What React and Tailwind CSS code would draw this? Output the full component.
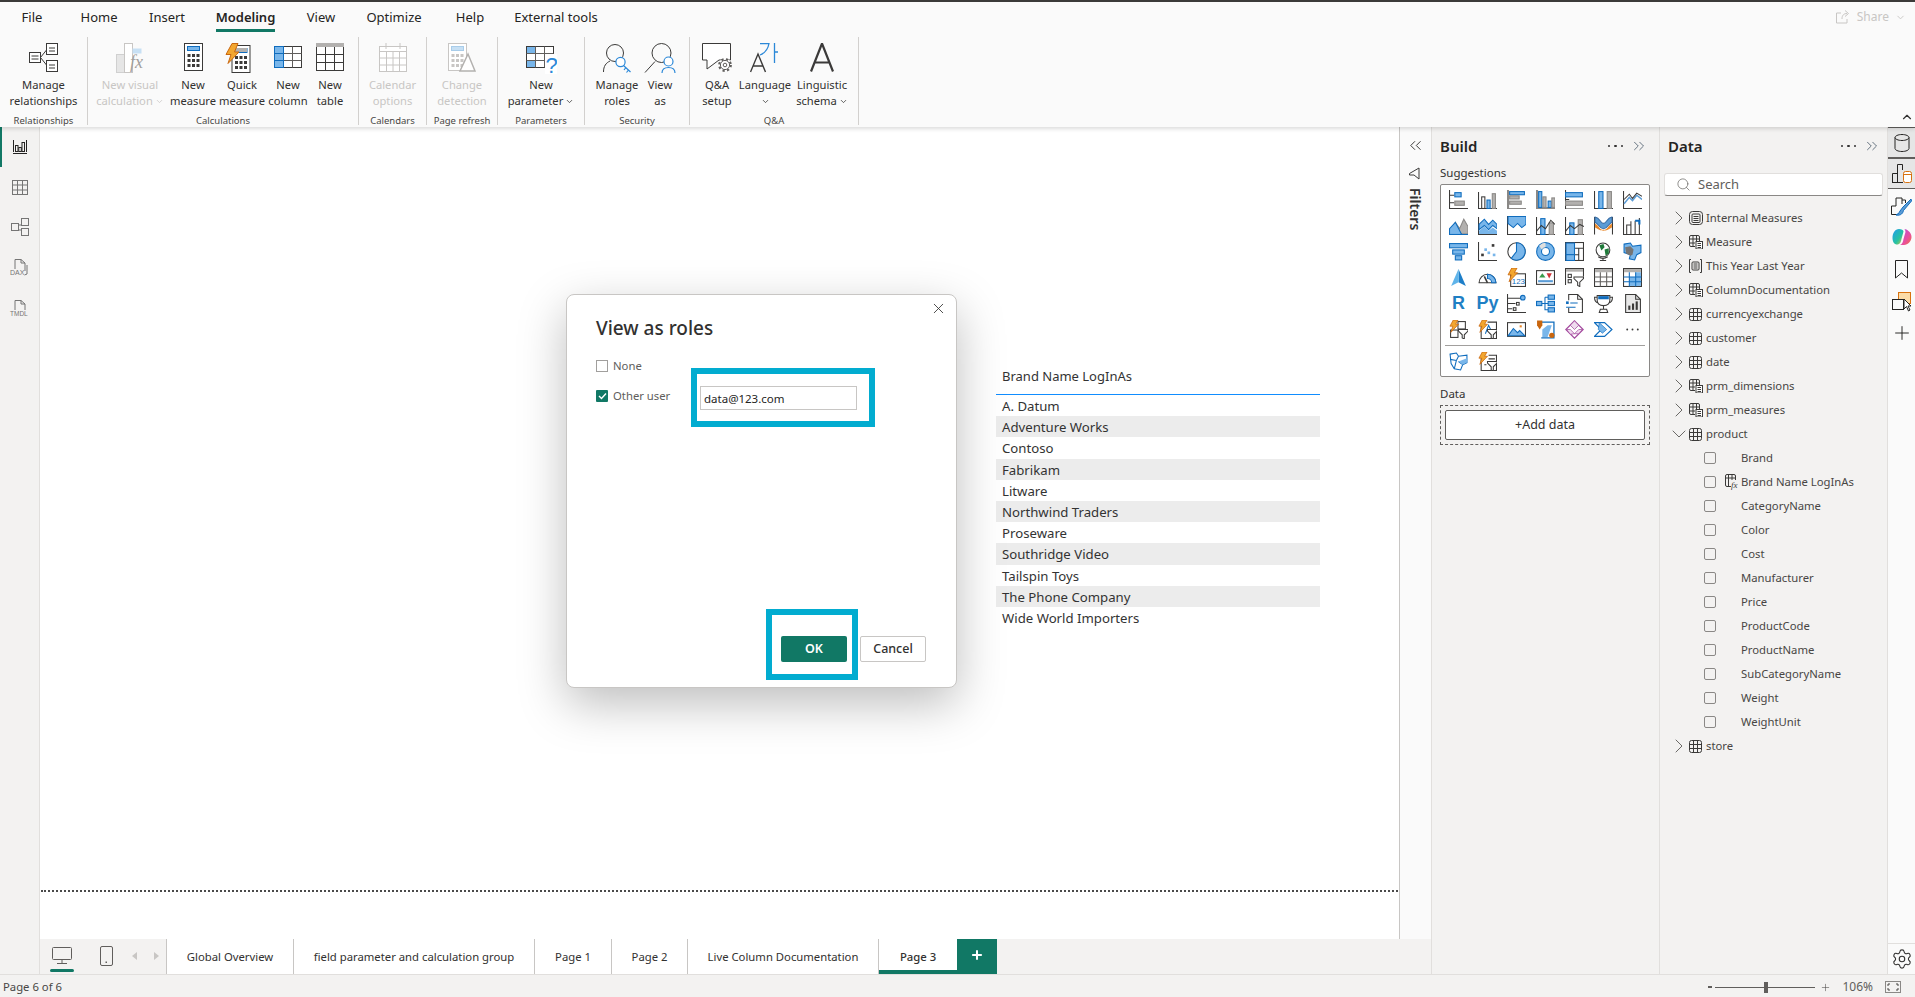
import React from 'react';
import { Search, X, Settings, ChevronRight, ChevronDown, ChevronUp, ChevronsLeft, ChevronsRight, Plus } from 'lucide-react';

const DK = '#3b3a39';
const BL = '#0f6cbd';
const FL = '#79b6ea';
const GR = '#b3b1af';
const LT = '#c8c6c4';

const Bx = ({ x, y, w, h, f = FL, s = BL }) => <rect x={x} y={y} width={w} height={h} fill={f} stroke={s} />;
const Gx = ({ x, y, w, h }) => <rect x={x} y={y} width={w} height={h} fill={GR} stroke="#8a8886" />;
const Ln = ({ d, s = DK, w = 1 }) => <path d={d} fill="none" stroke={s} strokeWidth={w} />;
const Bolt = ({ x = 0, y = 0, k = 1 }) => (
  <path transform={`translate(${x} ${y}) scale(${k})`} d="M4.5 0H9.5L7 4.5H10L2 13L4 6.5H1Z" fill="#f2a62f" stroke="#c9660e" strokeWidth=".8" />
);
const Funnel = ({ x = 0, y = 0 }) => (
  <path transform={`translate(${x} ${y})`} d="M.5.5H9.5V2L6 5.5V9.5L4 8.5V5.5L.5 2Z" fill="#fff" stroke={DK} />
);

const Viz = ({ children }) => (
  <svg width="19" height="19" viewBox="0 0 18 18" className="block">{children}</svg>
);

// visual gallery, left to right, top to bottom
const vizIcons = [
  <><Ln d="M.5 0V17.5H18M.5 5H5M.5 12H5" /><Bx x={5.5} y={2.5} w={6} h={4} /><Gx x={5.5} y={10.5} w={9} h={4} /></>,
  <><Ln d="M.5 2V17.5H18" /><rect x="3.5" y="6.5" width="3" height="11" fill="#fff" stroke={DK} /><Bx x={8.5} y={9.5} w={3} h={8} /><rect x="13.5" y="3.5" width="3" height="14" fill={GR} stroke="#8a8886" /></>,
  <><Ln d="M1 0V18H18" s="#8a8886" w={2} /><Bx x={2.5} y={1.5} w={14} h={3} /><Gx x={2.5} y={5.5} w={9} h={3} /><Gx x={2.5} y={10.5} w={11} h={3} /></>,
  <><Ln d="M1 0V17H18" s="#8a8886" w={2} /><Bx x={2.5} y={1.5} w={3} h={15} /><Gx x={6.5} y={6.5} w={3} h={10} /><Bx x={11.5} y={10.5} w={3} h={6} /><Gx x={15} y={7.5} w={3} h={9} /></>,
  <><Ln d="M.5 0V18H18M.5 9H4" /><Bx x={.5} y={2.5} w={16} h={4} /><Gx x={.5} y={10.5} w={16} h={4} /></>,
  <><Ln d="M.5 1V17.5H18" /><Bx x={4.5} y={1.5} w={4} h={16} /><Gx x={12.5} y={1.5} w={4} h={16} /></>,
  <><Ln d="M.5 1V17.5H18" /><Ln d="M1 13L6 7L9 10L13 5L18 9" s="#5a9bd5" w={1.4} /><Ln d="M1 9L6 4L9 8L13 3L18 6" /></>,
  <><path d="M1 17L6 6L10 12L14 3L18 10V17Z" fill={GR} stroke="#8a8886" /><path d="M.5 17.5V12L6 6L12 17.5Z" fill={FL} stroke={BL} /><Ln d="M0 17.5H18" s={BL} /></>,
  <><Ln d="M.5 1V17.5H18" /><path d="M1 8L6 3L10 8L14 4L18 8V12L14 9L10 13L6 9L1 13Z" fill={FL} stroke={BL} /><path d="M1 14L6 10L10 14L14 11L18 14V17H1Z" fill={FL} /></>,
  <><Ln d="M.5 0V17.5H18" /><path d="M1 .5H18V8L14 11L10 7L6 11L1 7Z" fill={FL} stroke={BL} /></>,
  <><Ln d="M.5 1V17.5H18" /><Bx x={4.5} y={2.5} w={4} h={15} /><Gx x={12.5} y={6.5} w={4} h={11} /><Ln d="M0 15L5 9L9 12L14 4L18 8" /></>,
  <><Ln d="M.5 1V17.5H18" /><rect x="4.5" y="6.5" width="4" height="11" fill={FL} stroke={BL} /><Gx x={12.5} y={3.5} w={4} h={14} /><Ln d="M0 15L5 9L9 12L14 8L18 10" /></>,
  <><Ln d="M.5 1V17.5M17.5 1V17.5" /><path d="M1 1C6 2 6 7 9 7S12 2 17 1V6C13 8 13 12 9 12S5 8 1 6Z" fill="#5a9bd5" stroke="#3a6ea5" /><path d="M1 7C5 9 5 13 9 13S13 9 17 7V11C13 13 12 14 9 14S5 13 1 11Z" fill="#e8882b" /></>,
  <><Ln d="M.5 1V17.5H18M3.5 17V8.5H7.5V17M7.5 17V5M11.5 17V4.5M15.5 17V2" /><Ln d="M11.5 4.5H15.5V8" s={BL} w={2} /></>,
  <><Bx x={.5} y={1.5} w={17} h={4} /><Bx x={3.5} y={7.5} w={11} h={4} /><Bx x={6} y={13} w={6} h={4} /></>,
  <><Ln d="M.5 0V17.5H18" /><rect x="3" y="11" width="2.5" height="2.5" fill={DK} /><rect x="6" y="6" width="2.5" height="2.5" fill={FL} /><rect x="9" y="9" width="2.5" height="2.5" fill={FL} /><rect x="13" y="2" width="2.5" height="2.5" fill={DK} /><rect x="14" y="11" width="2.5" height="2.5" fill={FL} /></>,
  <><circle cx="9" cy="9" r="8.2" fill="#fff" stroke={DK} /><path d="M9 9V.8A8.2 8.2 0 1 1 4 15.5Z" fill={FL} stroke={BL} /></>,
  <><circle cx="9" cy="9" r="6" fill="none" stroke={FL} strokeWidth="4.5" /><circle cx="9" cy="9" r="8.4" fill="none" stroke={BL} /><circle cx="9" cy="9" r="3.8" fill="none" stroke={BL} /><path d="M3 3.5A8 8 0 0 1 9 .8V5A4 4 0 0 0 5.5 7Z" fill="#e1dfdd" /></>,
  <><rect x=".5" y=".5" width="17" height="17" fill="#fff" stroke={DK} /><rect x="1" y="1" width="8" height="11" fill={FL} stroke={BL} /><rect x="1" y="12" width="8" height="5.5" fill={FL} stroke={BL} /><Ln d="M9.5 6H17.5M13 6V17.5M9.5 12H13" /></>,
  <><circle cx="8.5" cy="7.5" r="6.5" fill="#fff" stroke={DK} /><path d="M5 3L9 2L10 5L7 8ZM10 7L14 6L14 11L11 13Z" fill="#1f7a3a" /><Ln d="M4 14Q8.5 17 13 14M8.5 15V17.5M5.5 17.5H11.5" /></>,
  <><path d="M1 2L7 1L9 4L17 3V10L13 12L11 17L6 16L7 12L1 10Z" fill={FL} stroke={BL} /><path d="M2 5L7 4L10 7L9 12L7 13L3 11Z" fill="#757575" /></>,
  <><path d="M9 1L16 17L9 13.5Z" fill="#1d7ec8" /><path d="M9 1L2 17L9 13.5Z" fill="#5fb4ea" /></>,
  <><path d="M1 14A8 8 0 0 1 17 14Z" fill="#fff" stroke={DK} /><path d="M9 6A8 8 0 0 1 17 14H13A4 4 0 0 0 9 10Z" fill={FL} stroke={BL} /><Ln d="M9 14L6 8" w={1.5} /></>,
  <><rect x="3.5" y="5.5" width="14" height="12" fill="#fff" stroke={DK} /><text x="4.5" y="15" fontSize="7.5" fill="#0f6cbd" fontFamily="Liberation Sans">123</text><Bolt x={0} y={0} k={1} /></>,
  <><rect x=".5" y="2.5" width="17" height="13" fill="#fff" stroke={DK} /><path d="M3 9L6 5L9 9Z" fill="#3a9b4a" /><path d="M10 5H15L12.5 10Z" fill="#d13438" /><Ln d="M2 12.5H16" s="#5a9bd5" w={2} /></>,
  <><path d="M.5 16V.5H17.5V8" fill="none" stroke={DK} /><rect x="1" y="1" width="16" height="2.5" fill={GR} /><rect x="3" y="6" width="3" height="3" fill="#fff" stroke={DK} /><rect x="3" y="11" width="3" height="3" fill="#fff" stroke={DK} /><Funnel x={8} y={8} /></>,
  <><rect x=".5" y=".5" width="17" height="17" fill="#fff" stroke={DK} /><rect x="1" y="1" width="16" height="3" fill={GR} /><Ln d="M6 4V17.5M12 4V17.5M.5 8.5H17.5M.5 13H17.5" s="#605e5c" /></>,
  <><rect x=".5" y=".5" width="17" height="17" fill="#fff" stroke={DK} /><rect x="1" y="1" width="16" height="3" fill={GR} /><rect x="6" y="8.5" width="6" height="4.5" fill={FL} /><rect x="12" y="4" width="5" height="13" fill={FL} /><rect x="6" y="13" width="6" height="4" fill={FL} /><Ln d="M6 4V17.5M12 4V17.5M.5 8.5H17.5M.5 13H17.5" s={BL} /></>,
  'R',
  'Py',
  <><Ln d="M.5 0V17.5H18M1 4H13M1 9H8M1 14H5" /><circle cx="15" cy="3.5" r="2.2" fill={FL} stroke={BL} /><rect x="9" y="8" width="2.5" height="2.5" fill="#fff" stroke={DK} /><rect x="6" y="13" width="2.5" height="2.5" fill="#fff" stroke={DK} /></>,
  <><Bx x={.5} y={7} w={5} h={4} /><Bx x={11.5} y={1} w={6} h={4} /><Bx x={11.5} y={7} w={6} h={4} /><Bx x={11.5} y={13} w={6} h={4} /><Ln d="M5.5 9H11.5M8.5 3V15H11.5M8.5 3H11.5" s={BL} /></>,
  <><path d="M3.5 6V.5H12L16.5 5V17.5H3.5V13" fill="none" stroke={DK} /><Ln d="M12 .5V5H16.5" /><rect x="1" y="7" width="2.5" height="2.5" fill={BL} /><Ln d="M5 8.5H12M1 12.5H10" s={BL} /></>,
  <><Ln d="M3 1.5H15V6C15 10 12 11 9 11S3 10 3 6ZM3 3H.5C.5 7 2 8 4 8.5M15 3H17.5C17.5 7 16 8 14 8.5M9 11V14M5 17.5H13L12 14.5H6Z" /><path d="M4 2H14V5H4Z" fill={BL} /></>,
  <><path d="M2.5 17.5V.5H12L16.5 5V17.5Z" fill="#e8e8e8" stroke={DK} /><Ln d="M12 .5V5H16.5" /><rect x="5" y="11" width="2" height="4" fill={DK} /><rect x="8.5" y="9" width="2" height="6" fill={DK} /><rect x="12" y="7" width="2" height="8" fill={DK} /></>,
  <><rect x="8.5" y="1.5" width="7" height="7" fill="#fff" stroke={DK} /><rect x="1.5" y="9.5" width="7" height="7" fill="#fff" stroke={DK} /><Funnel x={8.5} y={8.5} /><Bolt x={0} y={0} k={.9} /></>,
  <><path d="M3 5V17.5H17.5V2H9" fill="none" stroke={DK} /><Ln d="M7 13L10 5L12 9" s={BL} /><Funnel x={8.5} y={8.5} /><Bolt x={0} y={0} k={.9} /></>,
  <><rect x=".5" y="2.5" width="17" height="13" fill="#fff" stroke={DK} /><path d="M1 15L6 8L10 12L12 10L17 15Z" fill={FL} stroke={BL} /><rect x="12" y="5" width="2" height="2" fill="#e8882b" /></>,
  <><path d="M3 2H17V17H5" fill="none" stroke={BL} strokeWidth="1.2" /><path d="M6 16V9L11 5H15L11 16Z" fill={FL} /><path d="M1 .5H6V5L3.5 9L1 5Z" fill="#c9660e" /><circle cx="15" cy="14.5" r="2.5" fill="#c9660e" /></>,
  <><path d="M9 .8L17.2 9L9 17.2L.8 9Z" fill="none" stroke="#a34a9e" strokeWidth="1.2" /><path d="M9 .8L13 5L9 9L5 5ZM5 9L9 13L5 13.5L1.5 9ZM13 9L16.5 9L13 13L9 13Z" fill="#f0dcef" stroke="#a34a9e" strokeWidth=".7" /></>,
  <><path d="M.5 2.5H10L17 9L10 15.5H.5L7 9Z" fill="#fff" stroke={BL} strokeWidth="1.1" /><path d="M5 2.5L12 9L8 12.5L4 9Z" fill={FL} stroke={BL} strokeWidth=".6" /></>,
  <><circle cx="4" cy="9" r=".9" fill={DK} /><circle cx="9" cy="9" r=".9" fill={DK} /><circle cx="14" cy="9" r=".9" fill={DK} /></>,
];

const extraIcons = [
  <><path d="M1 2L7 1L9 4L17 3V10L13 12L11 17L5 16L2 11Z" fill="#fff" stroke={BL} /><path d="M1 7L7 8L9 4M9 9L13 12M7 8L5 16" fill="none" stroke={BL} /><path d="M9 9L17 6V10L13 12Z" fill={FL} /></>,
  <><path d="M3 6V17.5H17.5V3H10" fill="none" stroke={DK} /><Ln d="M10 6.5H16M6 12H8" /><Funnel x={8.5} y={8.5} /><Bolt x={0} y={0} k={.9} /></>,
];

const tabs = [
  ['File', 'w-[44px]'], ['Home', 'w-[90px]'], ['Insert', 'w-[46px]'], ['Modeling', 'w-[111px]'],
  ['View', 'w-[40px]'], ['Optimize', 'w-[106px]'], ['Help', 'w-[46px]'], ['External tools', 'w-[126px]'],
];

const RibbonBtn = ({ w, lines, icon, off, caret }) => (
  <div className={`${w} flex flex-col items-center shrink-0`}>
    <div className="h-[40px] pt-[6px] flex justify-center">{icon}</div>
    {lines.map((t, i) => (
      <div key={i} className={`h-[16px] leading-[16px] whitespace-nowrap flex items-center gap-[2px] ${off ? 'text-[#c8c6c4]' : 'text-[#323130]'}`}>
        {t}
        {caret && i === lines.length - 1 && <ChevronDown size={9} strokeWidth={2} />}
      </div>
    ))}
  </div>
);

const RibbonGroup = ({ w, pad, label, children }) => (
  <div className={`${w} h-[88px] border-r border-[#d2d0ce] flex flex-col shrink-0`}>
    <div className={`h-[78px] flex ${pad || ''}`}>{children}</div>
    <div className="h-[10px] leading-[12px] text-center text-[9.5px] text-[#484644] whitespace-nowrap">{label}</div>
  </div>
);

const RelIcon = () => (
  <svg width="29" height="29" viewBox="0 0 29 29">
    <g fill="#fff" stroke={DK}>
      <rect x=".5" y="9.5" width="11" height="10" /><rect x="17.5" y=".5" width="11" height="11" /><rect x="17.5" y="17.5" width="11" height="11" />
    </g>
    <Ln d="M2.5 13H9.5M2.5 16H9.5M20 5H26M20 8H26M20 22H26M20 25H26M11.5 14.5L17.5 7M11.5 14.5L17.5 22" />
  </svg>
);
const VisCalcIcon = () => (
  <svg width="29" height="30" viewBox="0 0 29 30">
    <rect x=".5" y="11.5" width="8" height="18" fill="#e6e6e6" stroke="#d0d0d0" />
    <rect x="8.5" y=".5" width="8" height="29" fill="#fff" stroke={LT} />
    <rect x="16.5" y="5.5" width="9" height="5" fill="#c7e0f4" />
    <text x="14" y="25" fontSize="18" fontStyle="italic" fill="#a19f9d" fontFamily="Liberation Serif">fx</text>
  </svg>
);
const calcBody = (x, y) => (
  <g transform={`translate(${x} ${y})`}>
    <rect x=".5" y=".5" width="18" height="27" fill="#fff" stroke={DK} />
    <rect x="3.5" y="3.5" width="12" height="4" fill={FL} stroke={BL} />
    {[11, 16, 21].map((yy) => [3.5, 8, 12.5].map((xx) => <rect key={`${xx}-${yy}`} x={xx} y={yy} width="3" height="3" fill={DK} />))}
  </g>
);
const MeasureIcon = () => <svg width="19" height="28" viewBox="0 0 19 28">{calcBody(0, 0)}</svg>;
const QuickIcon = () => (
  <svg width="26" height="30" viewBox="0 0 26 30" className="mr-[8px]">
    {calcBody(6.5, 2)}
    <rect x="10" y="5" width="12" height="4" fill={GR} />
    <path d="M7 .5H13L9.5 9H14L3 20.5L6 11.5H1Z" fill="#f2a62f" stroke="#c9660e" />
  </svg>
);
const ColumnIcon = () => (
  <svg width="28" height="22" viewBox="0 0 28 22" className="mt-[3px]">
    <rect x=".5" y=".5" width="27" height="21" fill="#fff" stroke={DK} />
    <rect x="1" y="1" width="8.5" height="20" fill={FL} />
    <Ln d="M9.5 .5V21.5M18.5 .5V21.5M.5 7.5H27.5M.5 14.5H27.5" s="#605e5c" />
    <Ln d="M.5 7.5H9.5M.5 14.5H9.5" s={BL} />
    <rect x=".5" y=".5" width="9" height="21" fill="none" stroke={BL} />
  </svg>
);
const TableIcon = ({ c = DK, h = '#b3b1af' }) => (
  <svg width="28" height="28" viewBox="0 0 28 28">
    <rect x=".5" y=".5" width="27" height="27" fill="#fff" stroke={c} />
    <rect x="0" y="0" width="28" height="4" fill={h} />
    <Ln d="M9.5 4V27.5M18.5 4V27.5M.5 11.5H27.5M.5 19.5H27.5" s={c} />
  </svg>
);
const CalendarIcon = () => (
  <svg width="28" height="29" viewBox="0 0 28 29">
    <rect x=".5" y="3.5" width="27" height="25" fill="#fff" stroke={LT} />
    <Ln d="M7 0V6M21 0V6M.5 8.5H27.5M.5 15H27.5M.5 22H27.5M7.5 8.5V28.5M14 8.5V28.5M20.5 8.5V28.5" s={LT} />
  </svg>
);
const ChangeIcon = () => (
  <svg width="28" height="30" viewBox="0 0 28 30">
    <rect x=".5" y=".5" width="18" height="27" fill="#fff" stroke={LT} />
    <rect x="3.5" y="3.5" width="12" height="4" fill="#c7e0f4" stroke="#a9cdea" />
    {[11, 16, 21].map((yy) => [3.5, 8, 12.5].map((xx) => <rect key={`${xx}-${yy}`} x={xx} y={yy} width="3" height="3" fill={LT} />))}
    <path d="M12 28L20 11L27 28Z" fill="#fff" stroke={GR} strokeWidth="1.5" />
  </svg>
);
const ParamIcon = () => (
  <svg width="31" height="33" viewBox="0 0 31 33" className="mt-[3px]">
    <rect x=".5" y=".5" width="27" height="21" fill="#fff" stroke={DK} />
    <rect x="1" y="1" width="9" height="6.5" fill={FL} /><rect x="1" y="14.5" width="9" height="6.5" fill={FL} />
    <Ln d="M9.5 .5V21.5M18.5 .5V21.5M.5 7.5H27.5M.5 14.5H27.5" s="#605e5c" />
    <rect x="19" y="8" width="12" height="20" fill="#fff" />
    <text x="19.5" y="27" fontSize="22" fill="#2b88d8" fontFamily="Liberation Sans">?</text>
  </svg>
);
const RolesIcon = () => (
  <svg width="29" height="30" viewBox="0 0 29 30">
    <circle cx="12" cy="10" r="8.5" fill="none" stroke={DK} />
    <Ln d="M.5 29C.5 23 3 20 7 18M17 18L19 19" />
    <circle cx="17.5" cy="19" r="4.6" fill="#fff" stroke="#2b88d8" strokeWidth="1.2" />
    <Ln d="M20.5 22.5L27.5 29M25.5 27L23.5 29.5M22.5 25L21 27" s="#2b88d8" w={1.2} />
  </svg>
);
const ViewAsIcon = () => (
  <svg width="32" height="30" viewBox="0 0 32 30">
    <circle cx="17.5" cy="10" r="9.5" fill="none" stroke={DK} />
    <Ln d="M1 29.5L11 18.5" />
    <circle cx="24.5" cy="18.5" r="4.5" fill="#fff" stroke="#2b88d8" strokeWidth="1.2" />
    <Ln d="M18 30C18 26 21 24.5 24.5 24.5S31 26 31 30" s="#2b88d8" w={1.2} />
  </svg>
);
const QaIcon = () => (
  <svg width="31" height="30" viewBox="0 0 31 30">
    <path d="M.5.5H28.5V17H17L5 26V17H.5Z" fill="#fff" stroke={DK} />
    <circle cx="23" cy="22" r="6.5" fill="#fff" />
    <circle cx="23" cy="22" r="5.8" fill="none" stroke="#605e5c" strokeWidth="2.2" strokeDasharray="2.2 2.4" />
    <circle cx="23" cy="22" r="4.6" fill="#fff" stroke="#605e5c" />
    <circle cx="23" cy="22" r="1.8" fill="none" stroke="#605e5c" />
  </svg>
);
const LanguageIcon = () => (
  <svg width="30" height="30" viewBox="0 0 30 30">
    <Ln d="M.5 29L8 11L15.5 29M3.5 23H13" w={1.4} />
    <Ln d="M10 .5H19C18 6 15 10 10 12M24.5 0V20M24.5 9H28" s="#2b88d8" w={1.3} />
  </svg>
);
const LingIcon = () => (
  <svg width="24" height="29" viewBox="0 0 24 29">
    <Ln d="M1 28.5L12 .5L23 28.5M5 19.5H19" w={2.2} />
  </svg>
);

// tree glyphs
const TblGlyph = () => (
  <svg width="13" height="13" viewBox="0 0 13 13"><rect x=".5" y=".5" width="12" height="12" rx="2" fill="none" stroke={DK} /><Ln d="M4.5 .5V12.5M8.5 .5V12.5M.5 4.5H12.5M.5 8.5H12.5" /></svg>
);
const CalcTblGlyph = () => (
  <svg width="14" height="14" viewBox="0 0 14 14"><path d="M6 11.5H2A1.5 1.5 0 0 1 .5 10V2A1.5 1.5 0 0 1 2 .5H9A1.5 1.5 0 0 1 10.5 2V6" fill="none" stroke={DK} /><Ln d="M4 .5V11.5M7.5 .5V6M.5 4H10.5M.5 8H6" /><rect x="7" y="6.5" width="6.5" height="7.5" fill="#fff" stroke={DK} /><Ln d="M8.5 8.5H12M8.5 10.5H12M8.5 12.5H12" /></svg>
);
const MeasGlyph = () => (
  <svg width="14" height="14" viewBox="0 0 14 14"><rect x=".5" y=".5" width="13" height="13" rx="3" fill="none" stroke={DK} /><rect x="3" y="3" width="8" height="8.5" rx="1" fill="none" stroke={DK} /><Ln d="M4.5 5.5H9.5M4.5 7.5H9.5M4.5 9.5H9.5" /></svg>
);
const YearGlyph = () => (
  <svg width="15" height="14" viewBox="0 0 15 14"><Ln d="M3 .5H1.5V13.5H3M12 .5H13.5V13.5H12" /><rect x="4" y="3" width="7" height="8" rx="1" fill="none" stroke={DK} /><Ln d="M5.5 5H9.5M5.5 7H9.5M5.5 9H9.5" /></svg>
);
const FxGlyph = () => (
  <svg width="15" height="16" viewBox="0 0 15 16"><rect x=".5" y=".5" width="10" height="12" rx="1.5" fill="none" stroke={DK} /><Ln d="M3.5 .5V12.5M7 .5V12.5M.5 4H10.5" /><rect x="6" y="6" width="9" height="10" fill="#f3f2f1" /><text x="6" y="13.5" fontSize="9" fontStyle="italic" fill={DK} fontFamily="Liberation Serif">fx</text></svg>
);

const tree = [
  ['Internal Measures', <MeasGlyph />], ['Measure', <CalcTblGlyph />], ['This Year Last Year', <YearGlyph />],
  ['ColumnDocumentation', <CalcTblGlyph />], ['currencyexchange', <TblGlyph />], ['customer', <TblGlyph />],
  ['date', <TblGlyph />], ['prm_dimensions', <CalcTblGlyph />], ['prm_measures', <CalcTblGlyph />],
];
const fields = ['Brand', 'Brand Name LogInAs', 'CategoryName', 'Color', 'Cost', 'Manufacturer', 'Price', 'ProductCode', 'ProductName', 'SubCategoryName', 'Weight', 'WeightUnit'];
const brands = ['A. Datum', 'Adventure Works', 'Contoso', 'Fabrikam', 'Litware', 'Northwind Traders', 'Proseware', 'Southridge Video', 'Tailspin Toys', 'The Phone Company', 'Wide World Importers'];
const pages = [
  ['Global Overview', 'w-[127px]'], ['field parameter and calculation group', 'w-[241px]'], ['Page 1', 'w-[77px]'],
  ['Page 2', 'w-[76px]'], ['Live Column Documentation', 'w-[191px]'],
];

const TreeRow = ({ name, glyph, open }) => (
  <div className="h-[24px] flex items-center text-[#484644]">
    <div className="w-[14px] ml-[12px] flex justify-center shrink-0">
      {open ? <ChevronDown size={24} strokeWidth={0.8} className="shrink-0" /> : <ChevronRight size={24} strokeWidth={0.8} className="shrink-0" />}
    </div>
    <div className="w-[15px] ml-[2px] mr-[3px] flex justify-center shrink-0">{glyph}</div>
    <span className="whitespace-nowrap">{name}</span>
  </div>
);

const PaneHead = ({ title }) => (
  <div className="h-[38px] flex items-center pl-[8px] pr-[6px]">
    <span className="text-[15px] font-semibold text-[#252423]">{title}</span>
    <div className="ml-auto flex gap-[4px] mr-[7px]">
      <i className="w-[2.5px] h-[2.5px] rounded-full bg-[#323130]" /><i className="w-[2.5px] h-[2.5px] rounded-full bg-[#323130]" /><i className="w-[2.5px] h-[2.5px] rounded-full bg-[#323130]" />
    </div>
    <ChevronsRight size={18} strokeWidth={1.1} className="text-[#4a5a6a]" />
  </div>
);

const RailBtn = ({ children, active }) => (
  <div className={`h-[31px] flex items-center justify-center ${active ? 'bg-[#e6e6e6] border-y border-[#605e5c]' : ''}`}>{children}</div>
);

export default function App() {
  return (
    <div className="w-[1915px] h-[997px] overflow-hidden flex flex-col bg-white text-[11.3px] font-['Noto_Sans','Open_Sans',sans-serif]">
      {/* ribbon */}
      <div className="h-[127px] shrink-0 border-t-2 border-[#3b3a39] bg-[#fafafa] flex flex-col shadow-[0_2px_4px_rgba(0,0,0,0.14)] relative z-10">
        <div className="h-[30px] flex pl-[10px] text-[13px] text-[#252423]">
          {tabs.map(([t, w]) => (
            <div key={t} className={`${w} flex justify-center shrink-0`}>
              <span className={`h-[30px] leading-[30px] whitespace-nowrap ${t === 'Modeling' ? 'font-semibold border-b-[3px] border-[#117865]' : ''}`}>{t}</span>
            </div>
          ))}
          <div className="ml-auto flex items-center gap-[6px] pr-[9px] text-[#c8c6c4]">
            <svg width="15" height="14" viewBox="0 0 15 14"><Ln d="M11 9V13H.5V3H5M6 9C6 5 8 3.500 11 3.500M9 .5L12.500 3.500L9 6.500" s="#c8c6c4" /></svg>
            <span className="text-[12px]">Share</span>
            <ChevronDown size={11} />
          </div>
        </div>
        <div className="mt-[5px] flex text-[11.2px]">
          <RibbonGroup w="w-[88px]" label="Relationships">
            <RibbonBtn w="w-[87px]" lines={['Manage', 'relationships']} icon={<RelIcon />} />
          </RibbonGroup>
          <RibbonGroup w="w-[271px]" pad="pl-[10px]" label="Calculations">
            <RibbonBtn w="w-[64px]" off caret lines={['New visual', 'calculation']} icon={<VisCalcIcon />} />
            <RibbonBtn w="w-[62px]" lines={['New', 'measure']} icon={<MeasureIcon />} />
            <RibbonBtn w="w-[36px]" lines={['Quick', 'measure']} icon={<QuickIcon />} />
            <RibbonBtn w="w-[56px]" lines={['New', 'column']} icon={<ColumnIcon />} />
            <RibbonBtn w="w-[28px]" lines={['New', 'table']} icon={<TableIcon />} />
          </RibbonGroup>
          <RibbonGroup w="w-[68px]" label="Calendars">
            <RibbonBtn w="w-[67px]" off lines={['Calendar', 'options']} icon={<CalendarIcon />} />
          </RibbonGroup>
          <RibbonGroup w="w-[71px]" label="Page refresh">
            <RibbonBtn w="w-[70px]" off lines={['Change', 'detection']} icon={<ChangeIcon />} />
          </RibbonGroup>
          <RibbonGroup w="w-[87px]" label="Parameters">
            <RibbonBtn w="w-[86px]" caret lines={['New', 'parameter']} icon={<ParamIcon />} />
          </RibbonGroup>
          <RibbonGroup w="w-[105px]" label="Security">
            <RibbonBtn w="w-[64px]" lines={['Manage', 'roles']} icon={<RolesIcon />} />
            <RibbonBtn w="w-[22px]" lines={['View', 'as']} icon={<ViewAsIcon />} />
          </RibbonGroup>
          <RibbonGroup w="w-[169px]" label="Q&A">
            <RibbonBtn w="w-[54px]" lines={['Q&A', 'setup']} icon={<QaIcon />} />
            <RibbonBtn w="w-[42px]" caret lines={['Language', '']} icon={<LanguageIcon />} />
            <RibbonBtn w="w-[72px]" caret lines={['Linguistic', 'schema']} icon={<LingIcon />} />
          </RibbonGroup>
          <div className="ml-auto self-end pr-[1px] pb-[1px]">
            <ChevronUp size={14} strokeWidth={2} className="text-[#323130]" />
          </div>
        </div>
      </div>

      <div className="h-[847px] flex shrink-0">
        {/* left rail */}
        <div className="w-[40px] shrink-0 bg-[#f3f2f1] border-r border-[#e1dfdd] flex flex-col">
          <div className="h-[40px] border-l-2 border-[#117865] flex items-center justify-center pr-[2px]">
            <svg width="14" height="14" viewBox="0 0 14 14"><Ln d="M.5 0V12M13.5 0V12M0 13.5H14" s="#252423" /><rect x="2.5" y="5.5" width="2.5" height="6" fill="none" stroke="#252423" /><rect x="5.8" y="7.5" width="2.5" height="4" fill="none" stroke="#252423" /><rect x="9" y="2.5" width="2.5" height="9" fill="none" stroke="#252423" /></svg>
          </div>
          <div className="h-[40px] flex items-center justify-center">
            <svg width="16" height="15" viewBox="0 0 16 15"><rect x=".5" y=".5" width="15" height="14" fill="none" stroke="#757575" /><Ln d="M.5 5H15.5M.5 10H15.5M5.5 .5V14.5M10.5 .5V14.5" s="#757575" /></svg>
          </div>
          <div className="h-[40px] flex items-center justify-center">
            <svg width="18" height="18" viewBox="0 0 18 18"><g fill="none" stroke="#757575"><rect x=".5" y="5.5" width="7" height="7" /><rect x="10.5" y=".5" width="7" height="7" /><rect x="10.5" y="10.5" width="7" height="7" /></g><Ln d="M7.5 7H10.5M7.5 12H10.5" s="#757575" /></svg>
          </div>
          <div className="h-[40px] flex items-center justify-center pt-[2px]">
            <svg width="20" height="19" viewBox="0 0 20 19"><Ln d="M5 10V.5H11L15 4V12M11 .5V4H15" s="#757575" /><text x="0" y="16" fontSize="7" fill="#757575" fontFamily="Liberation Sans">DAX</text><Ln d="M17 6V15L14.5 16" s="#757575" /></svg>
          </div>
          <div className="h-[40px] flex items-center justify-center pt-[4px]">
            <svg width="22" height="19" viewBox="0 0 22 19"><Ln d="M6 10V.5H12L16 4V10M12 .5V4H16" s="#757575" /><text x="1" y="16" fontSize="6.500" fill="#757575" fontFamily="Liberation Sans">TMDL</text></svg>
          </div>
        </div>

        {/* canvas + page tabs */}
        <div className="w-[1391px] shrink-0 flex flex-col">
          <div className="h-[812px] flex">
            <div className="w-[1359px] shrink-0 px-[1px]">
              <div className="relative h-[765px] border-b-2 border-dotted border-[#4a4a4a]">
                {/* table visual */}
                <div className="absolute left-[955px] top-[233px] w-[324px] text-[13.2px] text-[#333333]">
                  <div className="h-[35px] border-b-[1.5px] border-[#118dff] pl-[6px] flex items-center pb-[1px] text-[13px]">Brand Name LogInAs</div>
                  {brands.map((b, i) => (
                    <div key={b} className={`h-[21.2px] pt-[1px] leading-[20px] pl-[6px] whitespace-nowrap ${i % 2 ? 'bg-[#ececec]' : ''}`}>{b}</div>
                  ))}
                </div>
                {/* dialog */}
                <div className="absolute left-[525px] top-[167px] w-[391px] h-[394px] bg-white rounded-[8px] border border-[#c8c6c4] shadow-[0_16px_48px_rgba(0,0,0,0.26)] flex flex-col">
                  <div className="h-[73px] pl-[29px] pr-[9px] flex justify-between">
                    <span className="text-[19px] font-medium text-[#323130] pt-[19px] leading-[28px]">View as roles</span>
                    <X size={17} strokeWidth={1.2} className="mt-[5px] text-[#323130]" />
                  </div>
                  <div className="flex flex-1 pl-[29px]">
                    <div className="w-[95px] flex flex-col text-[#605e5c]">
                      <label className="h-[12px] mt-[-8px] mb-[18px] flex items-center gap-[5px]">
                        <span className="w-[12px] h-[12px] border border-[#a19f9d] bg-white shrink-0" />None
                      </label>
                      <label className="h-[12px] flex items-center gap-[5px]">
                        <span className="w-[12px] h-[12px] rounded-[1px] bg-[#117865] flex items-center justify-center shrink-0">
                          <svg width="9" height="8" viewBox="0 0 9 8"><path d="M1 4L3.5 6.5L8 1.5" fill="none" stroke="#fff" strokeWidth="1.4" /></svg>
                        </span>Other user
                      </label>
                    </div>
                    <div className="h-[59px] w-[184px] border-[6px] border-[#02acd0] pl-[3px] pt-[12px]">
                      <input readOnly value="data@123.com" className="block w-[157px] h-[24px] border border-[#c8c6c4] pl-[3px] text-[11.5px] text-[#252423] outline-none" />
                    </div>
                  </div>
                  <div className="flex justify-end items-start gap-[2px] pr-[30px] pb-[7px]">
                    <div className="w-[92px] h-[71px] border-[6px] border-[#02acd0] pt-[21px] pl-[9px]">
                      <button className="block w-[66px] h-[26px] bg-[#117865] rounded-[2px] text-white font-semibold text-[12.5px]">OK</button>
                    </div>
                    <button className="mt-[27px] w-[66px] h-[26px] bg-white border border-[#c8c6c4] rounded-[2px] text-[#323130] font-medium text-[12.5px]">Cancel</button>
                  </div>
                </div>
              </div>
            </div>
            {/* filters pane */}
            <div className="w-[32px] shrink-0 border-l border-[#c8c6c4] bg-[#fafafa] flex flex-col items-center pt-[9px] text-[#323130]">
              <ChevronsLeft size={19} strokeWidth={1.2} />
              <svg width="13" height="13" viewBox="0 0 13 13" className="mt-[12px]"><path d="M.5 6.5L10 1V12L5 8H.5Z" fill="none" stroke={DK} /></svg>
              <span className="mt-[8px] text-[14px] font-semibold [writing-mode:vertical-rl]">Filters</span>
            </div>
          </div>
          {/* page tabs */}
          <div className="h-[35px] flex bg-[#f3f2f1]">
            <div className="w-[127px] shrink-0 flex items-center border-r border-[#c8c6c4] pb-[2px] relative">
              <div className="w-[44px] flex justify-center">
                <svg width="20" height="17" viewBox="0 0 20 17"><rect x=".5" y=".5" width="19" height="12" rx="1" fill="none" stroke="#605e5c" /><Ln d="M10 13V16M5 16.5H15" s="#605e5c" /></svg>
              </div>
              <div className="w-[44px] flex justify-center">
                <svg width="13" height="20" viewBox="0 0 13 20"><rect x=".5" y=".5" width="12" height="19" rx="1.5" fill="none" stroke="#605e5c" /><rect x="5.5" y="15.5" width="1.5" height="1.5" fill="#605e5c" /></svg>
              </div>
              <div className="flex items-center gap-[17px] pl-[4px]">
                <svg width="5" height="8" viewBox="0 0 5 8"><path d="M5 0V8L0 4Z" fill={LT} /></svg>
                <svg width="5" height="8" viewBox="0 0 5 8"><path d="M0 0V8L5 4Z" fill={LT} /></svg>
              </div>
              <span className="absolute left-[10px] bottom-[2px] w-[24px] h-[3px] rounded-full bg-[#117865]" />
            </div>
            {pages.map(([p, w]) => (
              <div key={p} className={`${w} shrink-0 bg-white border-r border-[#c8c6c4] flex items-center justify-center pt-[1px] text-[#323130] whitespace-nowrap`}>{p}</div>
            ))}
            <div className="w-[78px] shrink-0 bg-white border-b-[4px] border-[#117865] flex items-center justify-center pt-[5px] text-[#323130] font-medium">Page 3</div>
            <div className="w-[40px] shrink-0 bg-[#117865] flex items-center justify-center pb-[3px]">
              <Plus size={14} strokeWidth={3.5} className="text-white" />
            </div>
          </div>
        </div>

        {/* build pane */}
        <div className="w-[228px] shrink-0 bg-[#f3f2f1] border-l border-[#e1dfdd] px-[8px] text-[#323130]">
          <div className="ml-[-8px] mr-[-3px]"><PaneHead title="Build" /></div>
          <div className="h-[17px] leading-[16px] text-[11.5px]">Suggestions</div>
          <div className="w-[210px] h-[193px] mt-[2px] border border-[#8a8886] rounded-[2px] bg-white pt-[1px] px-[3px]">
            <div className="grid grid-cols-[repeat(7,29px)] auto-rows-[26px]">
              {vizIcons.map((ic, i) => (
                <div key={i} className="flex items-center justify-center">
                  {typeof ic === 'string'
                    ? <span className="text-[18px] leading-[20px] font-bold text-[#1f7fc4] font-['Liberation_Sans',sans-serif]">{ic}</span>
                    : <Viz>{ic}</Viz>}
                </div>
              ))}
            </div>
            <div className="mt-[3px] mb-[2px] mx-[1px] border-t border-[#a19f9d]" />
            <div className="grid grid-cols-[repeat(7,29px)] auto-rows-[26px]">
              {extraIcons.map((ic, i) => (
                <div key={i} className="flex items-center justify-center">
                  <Viz>{ic}</Viz>
                </div>
              ))}
            </div>
          </div>
          <div className="h-[16px] leading-[16px] mt-[9px] text-[11.5px]">Data</div>
          <div className="w-[210px] h-[40px] mt-[3px] border border-dashed border-[#605e5c] p-[4px]">
            <div className="h-full bg-white border border-[#605e5c] rounded-[2px] flex items-center justify-center pt-[1px] text-[12.5px]">+Add data</div>
          </div>
        </div>

        {/* data pane */}
        <div className="w-[228px] shrink-0 bg-[#f3f2f1] border-l border-[#e1dfdd]">
          <PaneHead title="Data" />
          <div className="mt-[8px] mx-[4px] h-[23px] bg-white rounded-[3px] border border-[#e1dfdd] border-b-[#8a8886] flex items-center pl-[11px] gap-[7px] text-[13px] text-[#605e5c]">
            <Search size={15} strokeWidth={1.1} />
            <span>Search</span>
          </div>
          <div className="mt-[10px]">
            {tree.map(([name, g]) => <TreeRow key={name} name={name} glyph={g} />)}
            <TreeRow name="product" glyph={<TblGlyph />} open />
            {fields.map((f) => (
              <div key={f} className="h-[24px] flex items-center text-[#484644]">
                <span className="ml-[44px] w-[12px] h-[12px] rounded-[2px] border border-[#8a8886] bg-[#f3f2f1] shrink-0" />
                <div className="w-[25px] pl-[7px] flex justify-center shrink-0">{f === 'Brand Name LogInAs' && <FxGlyph />}</div>
                <span className="whitespace-nowrap">{f}</span>
              </div>
            ))}
            <TreeRow name="store" glyph={<TblGlyph />} />
          </div>
        </div>

        {/* right rail */}
        <div className="w-[28px] shrink-0 bg-[#fafafa] border-l border-[#e1dfdd] flex flex-col">
          <RailBtn active>
            <svg width="16" height="18" viewBox="0 0 16 18"><path d="M1 3.5V14.5C1 16 4 17.5 8 17.5S15 16 15 14.5V3.5M1 3.5C1 2 4 .5 8 .5S15 2 15 3.5 12 6.5 8 6.5 1 5 1 3.5Z" fill="none" stroke="#252423" /></svg>
          </RailBtn>
          <RailBtn active>
            <svg width="20" height="19" viewBox="0 0 20 19"><Ln d="M.5 18.5V9.5H5.5M5.5 18.5V.5H10.5V6M0 18.5H11" s="#252423" /><rect x="11.5" y="7.5" width="8" height="11" rx="2" fill="#fff" stroke="#d9720f" /><Ln d="M11.5 10.5H19.5" s="#d9720f" /></svg>
          </RailBtn>
          <div className="h-[31px] flex items-center justify-center mt-[1px]">
            <svg width="21" height="20" viewBox="0 0 21 20"><Ln d="M.5 10H5V2H11V8M11 4H14.5V7M.5 10V18.5H7" s="#252423" /><path d="M20 3L12 11L9 15C8 18 6 18 5 19C10 20 12 17 12.5 14.5L20.5 5Z" fill="#5a9bd5" stroke="#0f6cbd" /></svg>
          </div>
          <div className="h-[31px] flex items-center justify-center">
            <svg width="20" height="18" viewBox="0 0 20 18">
              <defs>
                <linearGradient id="cpA" x1="0" y1="0" x2="1" y2="1"><stop offset="0" stopColor="#1f9cf0" /><stop offset=".6" stopColor="#27c3a0" /><stop offset="1" stopColor="#f2c12e" /></linearGradient>
                <linearGradient id="cpB" x1="0" y1="0" x2="1" y2="1"><stop offset="0" stopColor="#b14fe0" /><stop offset=".6" stopColor="#e84fa0" /><stop offset="1" stopColor="#f2703a" /></linearGradient>
              </defs>
              <path d="M7 1C3 1 .5 5 .5 10C.5 14 2.500 17 6 16.500C8 16 9 14 9.500 11L11.500 3.500C11.500 2 9.500 1 7 1Z" fill="url(#cpA)" />
              <path d="M12.500 1C14.500 1 19.500 4 19.500 9C19.500 13 16 17 12 17H8C10 16.500 11 14 11.500 11L13.500 4C13.500 3 13 2 12.500 1Z" fill="url(#cpB)" />
            </svg>
          </div>
          <div className="h-[34px] flex items-center justify-center">
            <svg width="13" height="19" viewBox="0 0 13 19"><path d="M.5.5H12.5V18L6.500 13L.5 18Z" fill="none" stroke="#252423" /></svg>
          </div>
          <div className="h-[31px] flex items-center justify-center">
            <svg width="20" height="20" viewBox="0 0 20 20"><rect x="6.500" y=".5" width="12" height="11" fill="#fbdca8" stroke="#d9720f" /><rect x=".5" y="7.5" width="11" height="10" fill="#fafafa" stroke="#252423" /><path d="M12 7L12 17L14.500 14.500L16.500 19L18 18L16 14L19 14Z" fill="#fff" stroke="#252423" /></svg>
          </div>
          <div className="h-[32px] flex items-center justify-center">
            <Plus size={22} strokeWidth={1} className="text-[#1b1a19]" />
          </div>
          <div className="mt-auto h-[31px] border-t border-[#e1dfdd] flex items-center justify-center">
            <Settings size={22} strokeWidth={1.2} className="text-[#323130]" />
          </div>
        </div>
      </div>

      {/* status bar */}
      <div className="h-[23px] shrink-0 bg-[#f3f2f1] border-t border-[#e1dfdd] flex items-center pl-[3px] pt-[2px] text-[#484644]">
        <span>Page 6 of 6</span>
        <div className="ml-auto flex items-center pr-[14px]">
          <span className="w-[4px] h-[2px] bg-[#605e5c]" />
          <div className="ml-[3px] w-[100px] h-[1px] bg-[#605e5c] relative">
            <span className="absolute left-[49px] top-[-5px] w-[4px] h-[11px] bg-[#605e5c]" />
          </div>
          <Plus size={11} strokeWidth={1.2} className="ml-[5px]" />
          <span className="ml-[11px] text-[12px] text-[#605e5c]">106%</span>
          <svg width="16" height="12" viewBox="0 0 16 12" className="ml-[12px]"><rect x=".5" y=".5" width="15" height="11" fill="none" stroke="#8a8886" /><Ln d="M3 5V3H5M11 3H13V5M13 7V9H11M5 9H3V7" s="#484644" /></svg>
        </div>
      </div>
    </div>
  );
}
